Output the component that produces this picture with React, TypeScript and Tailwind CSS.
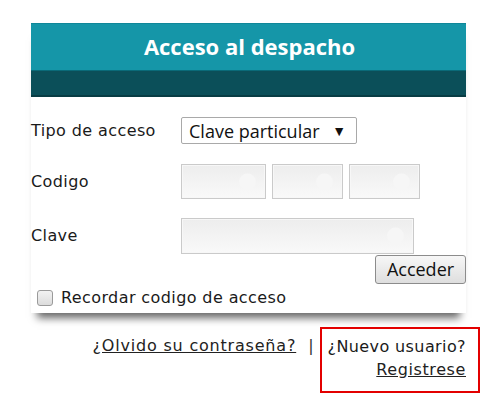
import React from 'react';

const labelFont = { fontFamily: '"DejaVu Sans", Verdana, sans-serif' };

function Field({ w }: { w: string }) {
  // light grey inset field with the faint round autofill mark on the right
  return (
    <div
      className={`${w} h-full relative border border-[#cacaca] shadow-[inset_0_0_0_1px_#f7f7f7] bg-gradient-to-b from-[#ededed] to-[#f9f9f9]`}
    >
      <span className="absolute right-[9px] top-1/2 -translate-y-1/2 w-[17px] h-[17px] rounded-full bg-[#f6f6f6]" />
    </div>
  );
}

export default function App() {
  return (
    <div className="w-[500px] h-[405px] bg-white pt-[23px] pl-[31px] text-[#1a1a1a]" style={labelFont}>
      {/* Panel */}
      <div className="w-[435px] bg-white shadow-[0_11px_8px_-6px_rgba(0,0,0,0.6)]">
        <div className="h-[47px] bg-[#1596a8] border-t border-[#0f8799] flex items-center justify-center">
          <span
            className="text-white text-[22px] font-bold pl-[2px] pb-[1px]"
            style={{ fontFamily: '"Open Sans", Lato, sans-serif' }}
          >
            Acceso al despacho
          </span>
        </div>
        <div className="h-[27px] bg-[#0b4f59] border-t border-[#0a6a78] border-b-2 border-b-[#083c44]" />

        <div className="pt-[20px] pb-[6px] text-[16px] tracking-[0.4px]">
          <div className="h-[27px] flex items-center">
            <span className="w-[150px]">Tipo de acceso</span>
            <div
              className="h-full w-[176px] border border-[#a9a9a9] rounded-[2px] flex items-center justify-between pl-[7px] pr-[10px] text-[18px] tracking-normal text-[#111]"
              style={{ fontFamily: '"Open Sans", "Noto Sans", sans-serif' }}
            >
              <span className="leading-none">Clave particular</span>
              <span className="text-[14px] leading-none">▼</span>
            </div>
          </div>

          <div className="mt-[20px] h-[35px] flex items-center">
            <span className="w-[150px]">Codigo</span>
            <div className="h-full flex gap-[6px]">
              <Field w="w-[85px]" />
              <Field w="w-[71px]" />
              <Field w="w-[71px]" />
            </div>
          </div>

          <div className="mt-[19px] h-[36px] flex items-center">
            <span className="w-[150px]">Clave</span>
            <div className="h-full flex">
              <Field w="w-[233px]" />
            </div>
          </div>

          <div className="mt-[1px] flex justify-end">
            <button
              className="h-[29px] w-[91px] border border-[#8c8c8c] rounded-[3px] bg-gradient-to-b from-[#f7f7f7] to-[#dedede] text-[18px] tracking-normal text-[#111] leading-none pb-[2px]"
              style={{ fontFamily: '"Open Sans", "Noto Sans", sans-serif' }}
            >
              Acceder
            </button>
          </div>

          <div className="mt-[5px] h-[18px] flex items-center pl-[6px]">
            <span className="w-[16px] h-[16px] rounded-[3px] border border-[#9a9a9a] bg-gradient-to-b from-[#f2f2f2] to-[#dcdcdc]" />
            <span className="ml-[8px]">Recordar codigo de acceso</span>
          </div>
        </div>
      </div>

      {/* Links */}
      <div className="w-[449px] mt-[14px] flex justify-end items-start text-[16px] tracking-[0.4px] leading-[23px]">
        <a href="#" className="pt-[7px] underline tracking-[0.8px] text-[#222]">¿Olvido su contraseña?</a>
        <span className="pt-[7px] ml-[12px] mr-[6px] text-[#333]">|</span>
        <div className="w-[160px] h-[66px] border-2 border-[#e30000] pt-[6px] pr-[12px] flex flex-col items-end">
          <span>¿Nuevo usuario?</span>
          <a href="#" className="underline tracking-[0.6px] text-[#222]">Registrese</a>
        </div>
      </div>
    </div>
  );
}
